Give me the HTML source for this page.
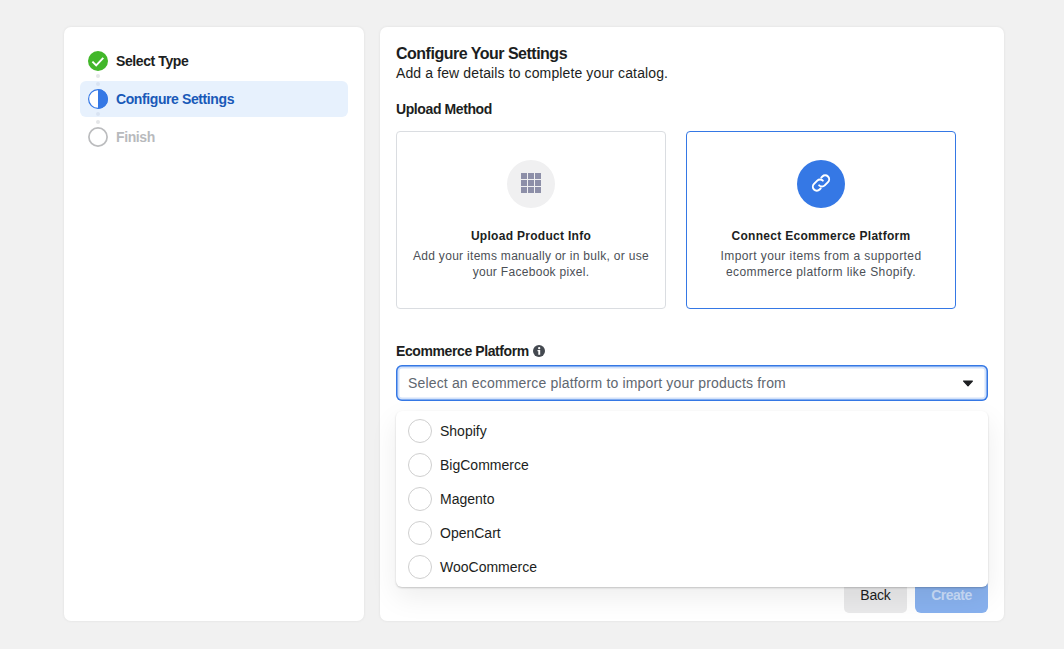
<!DOCTYPE html>
<html lang="en">
<head>
<meta charset="utf-8">
<title>Configure Your Settings</title>
<style>
*{box-sizing:border-box;margin:0;padding:0}
html,body{width:1064px;height:649px;overflow:hidden}
body{background:#f1f1f1;font-family:"Liberation Sans",Arial,sans-serif;color:#1c1e21;position:relative;font-size:14px}
.panel{position:absolute;background:#fff;border-radius:7px;box-shadow:0 0 3px rgba(0,0,0,.08)}
#left{left:64px;top:27px;width:300px;height:594px}
#right{left:380px;top:27px;width:624px;height:594px}
.step{position:absolute;left:16px;width:268px;height:36px;border-radius:6px}
.step .ic{position:absolute;left:8px;top:8px;width:20px;height:20px}
.step .lb{position:absolute;left:36px;top:0;line-height:36px;font-weight:700;font-size:14px;white-space:nowrap;letter-spacing:-.4px}
.s1{top:16px}
.s2{top:54px;background:#e7f1fd}
.s2 .lb{color:#1959b8}
.s3{top:92px}
.s3 .lb{color:#b8babd}
.dot{position:absolute;left:32px;width:4px;height:4px;border-radius:50%;background:#e4e6e8}
h1{position:absolute;left:16px;top:17px;font-size:16px;font-weight:700;line-height:20px;white-space:nowrap;letter-spacing:-.5px}
.sub{position:absolute;left:16px;top:37px;font-size:14px;line-height:18px;white-space:nowrap;letter-spacing:.12px}
.h2{position:absolute;left:16px;font-size:14px;font-weight:700;line-height:18px;white-space:nowrap;letter-spacing:-.4px}
.card{position:absolute;top:104px;width:270px;height:178px;border:1px solid #dadde1;border-radius:4px;background:#fff;text-align:center}
.card.sel{border-color:#3578e5}
.card .circ{position:absolute;left:110px;top:28px;width:48px;height:48px;border-radius:50%;background:#f0f0f1}
.card.sel .circ{background:#3578e5}
.card .t{position:absolute;left:0;right:0;top:96px;font-size:12px;font-weight:700;line-height:16px;letter-spacing:.29px}
.card .d{position:absolute;left:0;right:0;top:116px;font-size:12px;line-height:16px;color:#4b4f56;letter-spacing:.3px}
.select{position:absolute;left:16px;top:338px;width:592px;height:36px;border-radius:6px;box-shadow:inset 0 0 0 1.5px #3578e5,inset 0 0 0 3.5px #d3e2fa;background:#fff}
.select span{position:absolute;left:12px;top:1px;line-height:34px;font-size:14px;color:#606770;white-space:nowrap;letter-spacing:.16px}
.select svg{position:absolute;right:14px;top:15px}
.menu{position:absolute;left:396px;top:411px;width:592px;height:176px;background:#fff;border-radius:6px;box-shadow:0 1px 2px rgba(0,0,0,.2),0 10px 28px rgba(0,0,0,.075)}
.opt{position:absolute;left:0;width:100%;height:34px}
.opt b{position:absolute;left:12px;top:5px;width:24px;height:24px;border-radius:50%;border:1px solid #cfcfcf;background:#fff}
.opt span{position:absolute;left:44px;top:0;line-height:34px;font-size:14px;font-weight:400;white-space:nowrap}
.btn{position:absolute;top:553px;height:33px;border-radius:5px;font-size:14px;line-height:30.6px;text-align:center}
.back{left:464px;width:63px;background:#e9e9ea;color:#1c1e21;letter-spacing:-.2px}
.create{left:535px;width:73px;background:#88b1ee;color:#c9dcf8;font-weight:700;letter-spacing:-.5px;border-radius:6px}
</style>
</head>
<body>
<div class="panel" id="left">
  <div class="dot" style="top:47px"></div>
  <div class="dot" style="top:93px"></div>
  <div class="step s2">
    <svg class="ic" viewBox="0 0 20 20"><circle cx="10" cy="10" r="9.4" fill="#fff" stroke="#3578e5" stroke-width="1.2"/><path d="M10 0a10 10 0 0 1 0 20z" fill="#3578e5"/></svg>
    <div class="dot" style="left:16px;top:1px;background:#d8e3f2"></div><div class="dot" style="left:16px;top:31px;background:#d8e3f2"></div>
    <div class="lb">Configure Settings</div>
  </div>
  <div class="step s1">
    <svg class="ic" viewBox="0 0 20 20"><circle cx="10" cy="10" r="10" fill="#42b72a"/><path d="M4.4 10.6l3.8 3.8 7.1-7.5" fill="none" stroke="#fff" stroke-width="1.9"/></svg>
    <div class="lb">Select Type</div>
  </div>
  <div class="step s3">
    <svg class="ic" viewBox="0 0 20 20"><circle cx="10" cy="10" r="9.1" fill="#fff" stroke="#bbbcbe" stroke-width="1.7"/></svg>
    <div class="lb">Finish</div>
  </div>
</div>
<div class="panel" id="right">
  <h1>Configure Your Settings</h1>
  <div class="sub">Add a few details to complete your catalog.</div>
  <div class="h2" style="top:73px">Upload Method</div>
  <div class="card" style="left:16px">
    <div class="circ"><svg width="48" height="48" viewBox="0 0 48 48"><g fill="#8d8fa8" transform="translate(0,-1)"><rect x="14" y="14" width="6" height="6"/><rect x="21" y="14" width="6" height="6"/><rect x="28" y="14" width="6" height="6"/><rect x="14" y="21" width="6" height="6"/><rect x="21" y="21" width="6" height="6"/><rect x="28" y="21" width="6" height="6"/><rect x="14" y="28" width="6" height="6"/><rect x="21" y="28" width="6" height="6"/><rect x="28" y="28" width="6" height="6"/></g></svg></div>
    <div class="t">Upload Product Info</div>
    <div class="d">Add your items manually or in bulk, or use<br>your Facebook pixel.</div>
  </div>
  <div class="card sel" style="left:306px">
    <div class="circ"><svg width="48" height="48" viewBox="0 0 48 48"><g fill="none" stroke="#fff" stroke-width="2.1" stroke-linecap="round" transform="translate(24 23) scale(.93) translate(-24 -24)"><path d="M22 26.5a4.2 4.2 0 0 0 6 0l3.5-3.5a4.2 4.2 0 0 0-6-6l-1.2 1.2"/><path d="M26 21.5a4.2 4.2 0 0 0-6 0l-3.5 3.5a4.2 4.2 0 0 0 6 6l1.2-1.2"/></g></svg></div>
    <div class="t">Connect Ecommerce Platform</div>
    <div class="d" style="letter-spacing:.42px">Import your items from a supported<br>ecommerce platform like Shopify.</div>
  </div>
  <div class="h2" style="top:315px">Ecommerce Platform <svg width="12" height="12" viewBox="0 0 12 12" style="vertical-align:-1px;margin-left:1px"><circle cx="6" cy="6" r="6" fill="#444950"/><path d="M4.5 5h2.7v4.7H5.3V6.3H4.5z" fill="#fff"/><circle cx="6.2" cy="3.2" r="1.15" fill="#fff"/></svg></div>
  <div class="select"><span>Select an ecommerce platform to import your products from</span><svg width="12" height="7" viewBox="0 0 12 7"><path d="M1.6 1h8.8L6 5.8z" fill="#1c1e21" stroke="#1c1e21" stroke-width="1.2" stroke-linejoin="round"/></svg></div>
  <div class="btn back">Back</div>
  <div class="btn create">Create</div>
</div>
<div class="menu">
  <div class="opt" style="top:3px"><b></b><span>Shopify</span></div>
  <div class="opt" style="top:37px"><b></b><span>BigCommerce</span></div>
  <div class="opt" style="top:71px"><b></b><span>Magento</span></div>
  <div class="opt" style="top:105px"><b></b><span>OpenCart</span></div>
  <div class="opt" style="top:139px"><b></b><span>WooCommerce</span></div>
</div>
</body>
</html>
